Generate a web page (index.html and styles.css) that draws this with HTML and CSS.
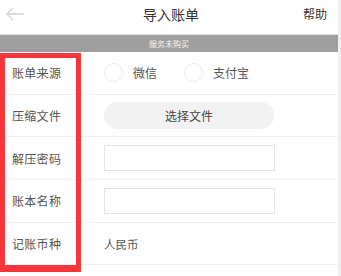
FILE: index.html
```html
<!DOCTYPE html>
<html>
<head>
<meta charset="utf-8">
<link rel="stylesheet" href="styles.css">
</head>
<body>
<div class="page">
  <header class="topbar">
    <svg class="back" width="20" height="14" viewBox="0 0 20 14"><path d="M8 1 L2 7 L8 13 M2 7 H19" fill="none" stroke="#d4d4d4" stroke-width="1.3"/></svg>
    <div class="title">导入账单</div>
    <div class="help">帮助</div>
  </header>
  <div class="notice">服务未购买</div>
  <div class="form">
    <div class="row">
      <div class="label">账单来源</div>
      <div class="field radios">
        <span class="radio"></span><span class="rtext">微信</span>
        <span class="radio r2"></span><span class="rtext">支付宝</span>
      </div>
    </div>
    <div class="row">
      <div class="label">压缩文件</div>
      <div class="field"><div class="btn">选择文件</div></div>
    </div>
    <div class="row">
      <div class="label">解压密码</div>
      <div class="field"><div class="input"></div></div>
    </div>
    <div class="row">
      <div class="label">账本名称</div>
      <div class="field"><div class="input"></div></div>
    </div>
    <div class="row">
      <div class="label">记账币种</div>
      <div class="field"><span class="value">人民币</span></div>
    </div>
    <div class="highlight"></div>
  </div>
</div>
</body>
</html>
```
FILE: styles.css
```css
* { box-sizing: border-box; }
html, body { margin: 0; padding: 0; background: #fff; }
body { font-family: "Noto Sans CJK SC", "Noto Sans", sans-serif; color: #444; }
.page { width: 341px; height: 276px; overflow: hidden; border-right: 3px solid #f0f0f0; }
.topbar { height: 35px; display: flex; align-items: center; justify-content: space-between; padding: 0 11px 7px 5px; border-bottom: 1px solid #e0e0e0; }
.back { display: block; }
.title { font-size: 14px; color: #333; margin-left: 14px; }
.help { font-size: 12px; color: #333; }
.notice { height: 17px; background: #9f9f9f; color: #f4f4f4; font-size: 8px; line-height: 17px; text-align: center; }
.form { position: relative; }
.row { height: 42.7px; display: flex; align-items: center; padding-left: 12px; border-bottom: 1px solid #efefef; }
.label { width: 92px; font-size: 12px; letter-spacing: 0.3px; color: #555; }
.field { flex: 1; display: flex; align-items: center; }
.radio { width: 19px; height: 19px; border: 1px solid #ececec; border-radius: 50%; }
.rtext { font-size: 12px; color: #555; margin-left: 10px; }
.r2 { margin-left: 27px; }
.btn { width: 170px; height: 27px; border-radius: 14px; background: #f2f2f2; font-size: 12px; color: #444; display: flex; align-items: center; justify-content: center; }
.input { width: 171px; height: 26px; border: 1px solid #e4e4e4; }
.value { font-size: 11.5px; color: #555; }
.highlight { position: absolute; left: 0; top: 1px; width: 81px; height: 219px; border: 5px solid #f7363b; border-bottom-width: 7px; pointer-events: none; }
```
